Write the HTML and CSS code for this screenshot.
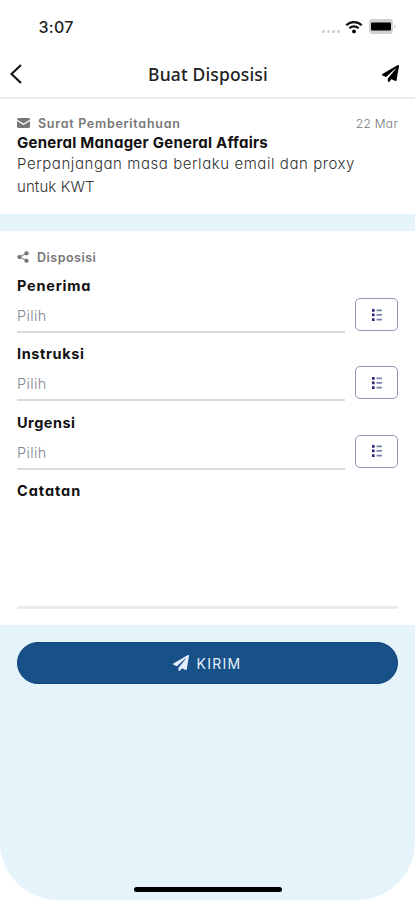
FILE: index.html
```html
<!DOCTYPE html>
<html lang="id">
<head>
<meta charset="utf-8">
<title>Buat Disposisi</title>
<link rel="stylesheet" href="styles.css">
</head>
<body>
<svg class="defs" aria-hidden="true">
  <symbol id="plane" viewBox="0 0 512 512"><path d="M476 3.200L12.500 270.600c-18.100 10.400-15.800 35.600 2.200 43.200L121 358.400l287.300-253.200c5.500-4.900 13.300 2.600 8.600 8.300L176 407v80.500c0 23.600 28.500 32.900 42.500 15.800L282 426l124.600 52.200c14.200 6 30.400-2.900 33-18.200l72-432C515 7.800 493.300-6.800 476 3.200z"/></symbol>
  <symbol id="list" viewBox="0 0 12 14"><path d="M1 1h2.600v2.700H1zM1 5.600h2.600v2.700H1zM1 10.300h2.600V13H1z"/><path class="lines" d="M5.500 1.500H11v1.700H5.500zM5.500 6.100H11v1.700H5.500zM5.500 10.800H11v1.700H5.500z"/></symbol>
</svg>
<div class="screen">
  <div class="status">
    <time>3:07</time>
    <div class="indicators">
      <span class="signal"><i></i><i></i><i></i><i></i></span>
      <svg class="wifi" viewBox="0 0 18 14"><path d="M1.300 5.200a11 11 0 0 1 15.400 0M4.300 8.300a6.800 6.800 0 0 1 9.400 0"/><circle cx="9" cy="11.400" r="1.900"/></svg>
      <svg class="battery" viewBox="0 0 27 15"><rect class="shell" width="24" height="15" rx="3.500"/><path class="shell" d="M25 5q3 2.500 0 5z"/><rect x="2" y="3.500" width="20" height="8" rx="1"/></svg>
    </div>
  </div>
  <header class="navbar">
    <svg class="back" viewBox="0 0 14 22"><path d="M12 2L2.500 11l9.500 9"/></svg>
    <h1>Buat Disposisi</h1>
    <svg class="send"><use href="#plane"/></svg>
  </header>
  <section class="letter">
    <div class="caption">
      <svg class="mail" viewBox="0 0 13 10"><rect width="13" height="10" rx="1.500"/><path d="M0 2.300l6.500 4 6.500-4"/></svg>
      <span class="kind">Surat Pemberitahuan</span>
      <span class="date">22 Mar</span>
    </div>
    <h2>General Manager General Affairs</h2>
    <p><span class="l1">Perpanjangan masa berlaku email dan proxy</span><br><span class="l2">untuk KWT</span></p>
  </section>
  <section class="form">
    <div class="caption">
      <svg class="share" viewBox="0 0 12 12"><path d="M9.500 2.300L2.500 6l7 3.700"/><circle cx="2.500" cy="6" r="1.700"/><circle cx="9.500" cy="2.300" r="1.700"/><circle cx="9.500" cy="9.700" r="1.700"/></svg>
      <span class="group">Disposisi</span>
    </div>
    <div class="field"><h3 class="recipient">Penerima</h3><div class="row"><div class="input">Pilih</div><button><svg><use href="#list"/></svg></button></div></div>
    <div class="field"><h3 class="instruction">Instruksi</h3><div class="row"><div class="input">Pilih</div><button><svg><use href="#list"/></svg></button></div></div>
    <div class="field"><h3 class="urgency">Urgensi</h3><div class="row"><div class="input">Pilih</div><button><svg><use href="#list"/></svg></button></div></div>
    <h3 class="notes">Catatan</h3>
    <div class="note"></div>
  </section>
  <footer>
    <button class="submit"><svg><use href="#plane"/></svg><span>KIRIM</span></button>
    <div class="home"></div>
  </footer>
</div>
</body>
</html>
```
FILE: styles.css
```css
* { box-sizing: border-box; }
body { margin: 0; background: #fff; color: #111; font-family: Inter, sans-serif; font-feature-settings: "cv11"; }
h1, h2, h3, p { margin: 0; }
svg { display: block; flex: none; }
.defs { position: absolute; width: 0; height: 0; }
.screen { width: 415px; height: 900px; display: flex; flex-direction: column; overflow: hidden; }
.status { height: 52px; padding: 4px 19px 0 38.5px; display: flex; align-items: center; justify-content: space-between; }
.status time { font-size: 16px; font-weight: 500; letter-spacing: .3px; color: #222; margin-top: -2px; }
.indicators { display: flex; align-items: center; margin-top: -3px; }
.signal { display: flex; gap: 2px; margin: 9px 5px 0 0; }
.signal i { width: 3px; height: 3px; border-radius: 50%; background: #ccc; }
.wifi { width: 18px; height: 14px; margin-right: 6px; }
.wifi path { fill: none; stroke: #111; stroke-width: 2.2; }
.battery { width: 27px; height: 15px; }
.shell { fill: #d0d0d0; }
.navbar { height: 47px; border-bottom: 2px solid #ececec; display: flex; align-items: center; justify-content: space-between; padding: 0 16px 2px 9px; }
.back { width: 14px; height: 22px; fill: none; stroke: #111; stroke-width: 2.1; }
h1 { font: 500 17.5px "Noto Sans", sans-serif; letter-spacing: .15px; margin-left: 11px; color: #222; }
.send { width: 17px; height: 17px; }
.letter { height: 115px; padding: 15px 17px 0; }
.caption { display: flex; align-items: center; height: 18px; font-size: 12.5px; font-weight: 600; color: #777; }
.mail { width: 13px; height: 10px; margin-right: 8px; fill: #777; }
.mail path { fill: none; stroke: #fff; stroke-width: 1.2; }
.kind { letter-spacing: .72px; }
.date { margin-left: auto; font-weight: 300; font-size: 12px; letter-spacing: .3px; }
h2 { font-size: 15px; line-height: 20px; font-weight: 700; letter-spacing: .26px; white-space: nowrap; padding-top: 1px; }
p { font-size: 15px; line-height: 22.5px; font-weight: 300; color: #333; white-space: nowrap; }
.l1 { letter-spacing: .56px; }
.l2 { letter-spacing: .1px; }
.form { height: 411px; border-top: 17px solid #e5f3fb; padding: 17px 17px 0; }
.share { width: 12px; height: 12px; margin-right: 8px; fill: #777; stroke: #777; }
.share path { fill: none; }
.group { letter-spacing: .5px; }
.field { height: 68.3px; }
.field:nth-child(2) { margin-top: 1px; }
h3 { font-size: 14.5px; line-height: 20px; font-weight: 700; padding-top: 9px; height: 29px; }
.recipient { letter-spacing: .8px; }
.instruction { letter-spacing: .62px; }
.urgency { letter-spacing: .5px; }
.notes { letter-spacing: .95px; }
.row { display: flex; align-items: flex-start; justify-content: space-between; padding-top: 2px; }
.input { width: 328px; height: 35px; border-bottom: 2px solid #d9dadd; line-height: 36px; font-size: 14.5px; font-weight: 300; color: #85888f; letter-spacing: .4px; }
.row button { width: 43px; height: 33px; padding: 0; background: #fff; border: 1.500px solid #9295ba; border-radius: 5px; display: flex; align-items: center; justify-content: center; }
.row svg { width: 12px; height: 14px; fill: #28286f; }
.lines { fill: #7682ac; }
.note { height: 108px; border-bottom: 3px solid #ebebec; }
footer { flex: 1; background: #e5f3fb; border-radius: 0 0 58px 58px; padding: 17px 17px 8px; display: flex; flex-direction: column; align-items: center; justify-content: space-between; }
.submit { width: 381px; height: 42px; border: 1px solid #104580; border-radius: 21px; background: #185088; color: #e3effc; display: flex; align-items: center; justify-content: center; padding: 0; font: 400 14px Inter, sans-serif; letter-spacing: 1.3px; gap: 7px; }
.submit svg { width: 16px; height: 16px; fill: #e3effc; }
.home { width: 148px; height: 5px; border-radius: 3px; background: #000; }
```
